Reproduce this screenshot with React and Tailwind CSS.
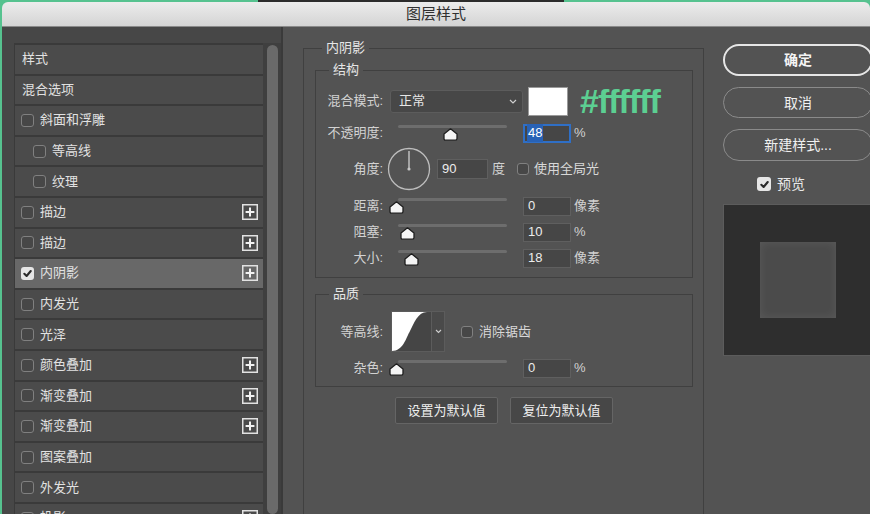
const items = [
  { label: "样式" },
  { label: "混合选项" },
  { label: "斜面和浮雕", box: true },
  { label: "等高线", box: true, indent: true },
  { label: "纹理", box: true, indent: true },
  { label: "描边", box: true, plus: true },
  { label: "描边", box: true, plus: true },
  { label: "内阴影", box: true, plus: true, checked: true },
  { label: "内发光", box: true },
  { label: "光泽", box: true },
  { label: "颜色叠加", box: true, plus: true },
  { label: "渐变叠加", box: true, plus: true },
  { label: "渐变叠加", box: true, plus: true },
  { label: "图案叠加", box: true },
  { label: "外发光", box: true },
  { label: "投影", box: true, plus: true },
];

function Check({ checked, size = "h-[13px] w-[13px]" }) {
  if (checked) {
    return (
      <span className={`flex ${size} shrink-0 items-center justify-center rounded-[3px] bg-[#e6e6e6]`}>
        <svg width="9" height="9" viewBox="0 0 10 10">
          <path d="M1.5 5.3 L4 7.8 L8.6 2.2" fill="none" stroke="#2a2a2a" strokeWidth="2.3" strokeLinecap="round" strokeLinejoin="round" />
        </svg>
      </span>
    );
  }
  return <span className={`block ${size} shrink-0 rounded-[3px] border border-[#808080] bg-[#474747]`} />;
}

function Plus() {
  return (
    <svg width="16" height="16" viewBox="0 0 16 16" className="shrink-0">
      <rect x="0.75" y="0.75" width="14.5" height="14.5" fill="none" stroke="#e2e2e2" strokeWidth="1.5" />
      <path d="M8 3.6V12.4M3.6 8H12.4" stroke="#f2f2f2" strokeWidth="2" />
    </svg>
  );
}

function Thumb({ left }) {
  return (
    <svg width="15" height="13" viewBox="0 0 15 13" className="absolute top-[8px]" style={{ left }}>
      <path d="M7.5 0.8 L14 6 V10.6 Q14 12.2 12.4 12.2 H2.6 Q1 12.2 1 10.6 V6 Z" fill="#f4f4f4" stroke="#1e1e1e" strokeWidth="1.3" strokeLinejoin="round" />
    </svg>
  );
}

function Slider({ left }) {
  return (
    <div className="relative ml-[7px] h-[26px] w-[125px] shrink-0">
      <div className="absolute left-[8px] top-[5px] h-[3px] w-[109px] rounded-full bg-[#6d6d6d]" />
      <Thumb left={left} />
    </div>
  );
}

function Field({ value }) {
  return (
    <div className="ml-[8px] flex h-[19px] w-[48px] shrink-0 items-center border border-[#5f5f5f] bg-[#464646] pl-[4px] text-[13px] text-[#ececec]">
      {value}
    </div>
  );
}

function Label({ children }) {
  return <span className="w-[67px] shrink-0 text-right text-[13px] text-[#d2d2d2]">{children}</span>;
}

function SliderRow({ label, left, value, unit, className = "" }) {
  return (
    <div className={`flex h-[26px] items-center ${className}`}>
      <Label>{label}</Label>
      <Slider left={left} />
      <Field value={value} />
      <span className="ml-[3px] text-[13px] text-[#d2d2d2]">{unit}</span>
    </div>
  );
}

export default function App() {
  return (
    <div className="flex h-[514px] w-[870px] flex-col overflow-hidden bg-[#56c28f] font-['Liberation_Sans','Noto_Sans_CJK_SC',sans-serif] leading-[18px]">
      <div className="h-[2px] shrink-0">
        <div className="ml-[258px] h-[2px] w-[306px] bg-[#2c2c2c]" />
      </div>
      <div className="ml-[2px] flex min-h-0 flex-1 flex-col overflow-hidden rounded-t-[6px]">
        <div className="flex h-[25px] shrink-0 items-center justify-center border-b border-[#8a8a8a] bg-linear-to-b from-[#ececec] to-[#d4d4d4] text-[15px] text-[#303030]">
          图层样式
        </div>
        <div className="flex min-h-0 flex-1">
          <div className="flex w-[281px] shrink-0 border-r-2 border-[#3a3a3a] bg-[#474747] pl-[12px] pt-[16px]">
            <div className="w-[249px] shrink-0 border-l border-t-2 border-[#3a3a3a]">
              {items.map((it, i) => (
                <div
                  key={i}
                  className={`flex h-[30.6px] items-center border-b-2 border-[#3a3a3a] pr-[5px] text-[13px] text-[#e2e2e2] ${
                    it.checked ? "bg-[#686868]" : "bg-[#4b4b4b]"
                  } ${it.box ? (it.indent ? "pl-[18px]" : "pl-[6px]") : "pl-[7px]"}`}
                >
                  {it.box && <Check checked={it.checked} />}
                  <span className={it.box ? "ml-[6px] flex-1" : "flex-1"}>{it.label}</span>
                  {it.plus && <Plus />}
                </div>
              ))}
            </div>
            <div className="flex w-[18px] shrink-0 justify-center bg-[#3f3f3f] pt-[2px]">
              <div className="w-[11px] rounded-full bg-[#6a6a6a]" />
            </div>
          </div>

          <div className="flex min-w-0 flex-1 overflow-hidden bg-[#535353] pl-[20px] pt-[12px]">
            <fieldset className="h-[500px] w-[401px] shrink-0 border border-[#404040] pl-[11px] pr-[10px]">
              <legend className="ml-[7px] px-[4px] text-[13px] text-[#e6e6e6]">内阴影</legend>

              <fieldset className="mt-[4px] border border-[#404040] pb-[6px] pt-[7px]">
                <legend className="ml-[13px] px-[4px] text-[13px] text-[#e6e6e6]">结构</legend>
                <div className="flex h-[30px] items-center">
                  <Label>混合模式:</Label>
                  <div className="ml-[7px] flex h-[23px] w-[133px] shrink-0 items-center justify-between rounded-[3px] border border-[#5c5c5c] bg-[#474747] pl-[8px] pr-[5px] text-[13px] text-[#e6e6e6]">
                    <span>正常</span>
                    <svg width="8" height="5" viewBox="0 0 8 5">
                      <path d="M1 1 L4 4 L7 1" fill="none" stroke="#cfcfcf" strokeWidth="1.2" />
                    </svg>
                  </div>
                  <div className="ml-[5px] h-[29px] w-[40px] shrink-0 border border-[#9a9a9a] bg-white" />
                  <span className="ml-[12px] text-[34px] font-bold leading-none tracking-[-1px] text-[#5ccf92]">#ffffff</span>
                </div>
                <div className="mt-[2px] flex h-[30px] items-center">
                  <Label>不透明度:</Label>
                  <Slider left={53} />
                  <div className="ml-[8px] flex h-[19px] w-[48px] shrink-0 items-center border-2 border-[#2f6fc6] bg-[#464646] pl-[2px] text-[13px] text-white">
                    <span className="bg-[#2862b6] px-[1px]">48</span>
                  </div>
                  <span className="ml-[3px] text-[13px] text-[#d2d2d2]">%</span>
                </div>
                <div className="flex h-[42px] items-center">
                  <Label>角度:</Label>
                  <svg width="44" height="44" viewBox="0 0 44 44" className="ml-[4px] shrink-0">
                    <circle cx="22" cy="22" r="20.5" fill="none" stroke="#bdbdbd" strokeWidth="1.3" />
                    <path d="M22 22 V4" stroke="#c8c8c8" strokeWidth="1.4" />
                    <circle cx="22" cy="22" r="1.6" fill="#c8c8c8" />
                  </svg>
                  <div className="ml-[6px] flex h-[20px] w-[51px] shrink-0 items-center border border-[#5f5f5f] bg-[#464646] pl-[4px] text-[13px] text-[#ececec]">
                    90
                  </div>
                  <span className="ml-[4px] text-[13px] text-[#d2d2d2]">度</span>
                  <span className="ml-[12px]">
                    <Check size="h-[12px] w-[12px]" />
                  </span>
                  <span className="ml-[5px] text-[13px] text-[#d8d8d8]">使用全局光</span>
                </div>
                <SliderRow className="mt-[3px]" label="距离:" left={-1} value="0" unit="像素" />
                <SliderRow label="阻塞:" left={10} value="10" unit="%" />
                <SliderRow label="大小:" left={14} value="18" unit="像素" />
              </fieldset>

              <fieldset className="mt-[7px] border border-[#404040] pb-[5px] pt-[8px]">
                <legend className="ml-[13px] px-[4px] text-[13px] text-[#e6e6e6]">品质</legend>
                <div className="flex h-[41px] items-center">
                  <Label>等高线:</Label>
                  <div className="ml-[8px] flex h-[41px] shrink-0 border border-[#5c5c5c]">
                    <svg width="39" height="39" viewBox="0 0 39 39" className="bg-[#454545]">
                      <path d="M0 39 C11 39 14 26 18 19 C22 11 26 0 35 0 L0 0 Z" fill="#ffffff" />
                    </svg>
                    <div className="flex w-[13px] items-center justify-center border-l border-[#5c5c5c] bg-[#4a4a4a]">
                      <svg width="7" height="5" viewBox="0 0 7 5">
                        <path d="M1 1 L3.5 3.5 L6 1" fill="none" stroke="#cfcfcf" strokeWidth="1.1" />
                      </svg>
                    </div>
                  </div>
                  <span className="ml-[16px]">
                    <Check size="h-[12px] w-[12px]" />
                  </span>
                  <span className="ml-[6px] text-[13px] text-[#d8d8d8]">消除锯齿</span>
                </div>
                <SliderRow className="mt-[3px]" label="杂色:" left={-1} value="0" unit="%" />
              </fieldset>

              <div className="mt-[10px] flex justify-center gap-[12px]">
                <div className="flex h-[27px] w-[103px] items-center justify-center rounded-[2px] border border-[#656565] bg-[#474747] text-[13px] text-[#eeeeee]">
                  设置为默认值
                </div>
                <div className="flex h-[27px] w-[103px] items-center justify-center rounded-[2px] border border-[#656565] bg-[#474747] text-[13px] text-[#eeeeee]">
                  复位为默认值
                </div>
              </div>
            </fieldset>

            <div className="ml-[19px] flex w-[150px] shrink-0 flex-col">
              <div className="mt-[5px] flex h-[32px] items-center justify-center rounded-full border-2 border-[#e6e6e6] text-[14px] font-bold text-[#f4f4f4]">
                确定
              </div>
              <div className="mt-[11px] flex h-[31px] items-center justify-center rounded-full border border-[#8a8a8a] text-[14px] text-[#f0f0f0]">
                取消
              </div>
              <div className="mt-[11px] flex h-[32px] items-center justify-center rounded-full border border-[#8a8a8a] text-[14px] text-[#f0f0f0]">
                新建样式...
              </div>
              <div className="mt-[14px] flex h-[18px] items-center pl-[34px]">
                <Check checked size="h-[14px] w-[14px]" />
                <span className="ml-[6px] text-[14px] text-[#e8e8e8]">预览</span>
              </div>
              <div className="mt-[11px] flex h-[152px] items-center justify-center border border-[#5c5c5c] bg-[#2e2e2e]">
                <div className="h-[76px] w-[76px] bg-[#4b4b4b] shadow-[inset_0_0_10px_rgba(255,255,255,0.09)]" />
              </div>
            </div>
          </div>
        </div>
      </div>
    </div>
  );
}
